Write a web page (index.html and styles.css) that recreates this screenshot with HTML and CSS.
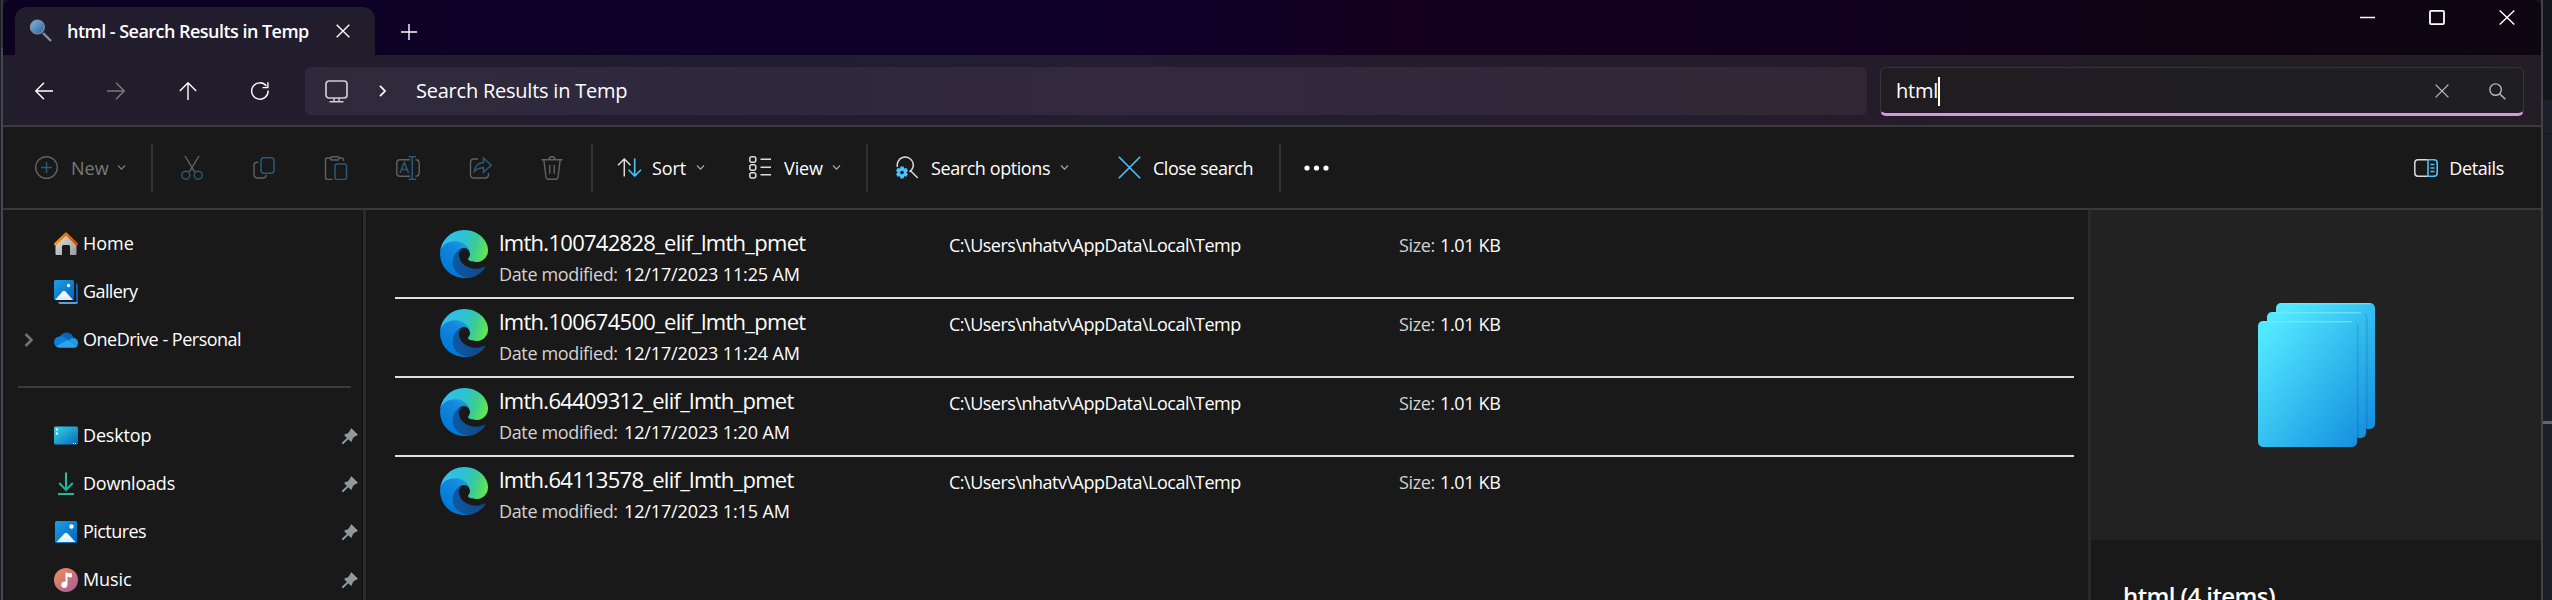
FILE: index.html
```html
<!DOCTYPE html>
<html lang="en">
<head>
<meta charset="utf-8">
<title>html - Search Results in Temp</title>
<link rel="stylesheet" href="styles.css">
</head>
<body>
<svg class="defs" width="0" height="0">
  <defs>
    <linearGradient id="edge-a" x1="63" y1="178" x2="241" y2="178" gradientUnits="userSpaceOnUse"><stop offset="0" stop-color="#0c5aa6"/><stop offset="1" stop-color="#134787"/></linearGradient>
    <linearGradient id="edge-b" x1="150" y1="80" x2="50" y2="225" gradientUnits="userSpaceOnUse"><stop offset="0" stop-color="#1b9de2"/><stop offset=".3" stop-color="#1488dd"/><stop offset="1" stop-color="#0078d6"/></linearGradient>
    <linearGradient id="edge-c" x1="10" y1="70" x2="255" y2="140" gradientUnits="userSpaceOnUse"><stop offset="0" stop-color="#35bdf3"/><stop offset=".45" stop-color="#2bc3d2"/><stop offset=".7" stop-color="#3bcb95"/><stop offset="1" stop-color="#66e949"/></linearGradient>
    <linearGradient id="sheet" x1="0" y1="0" x2="1" y2="1"><stop offset=".08" stop-color="#52e8ff"/><stop offset="1" stop-color="#1490df"/></linearGradient>
    <linearGradient id="photo" x1="0" y1="0" x2="1" y2="1"><stop offset="0" stop-color="#1ba0e6"/><stop offset="1" stop-color="#0463b8"/></linearGradient>
    <linearGradient id="desk" x1="0" y1="0" x2="1" y2="1"><stop offset="0" stop-color="#35d5e6"/><stop offset="1" stop-color="#0568bd"/></linearGradient>
    <linearGradient id="down" x1="0" y1="0" x2="0" y2="24" gradientUnits="userSpaceOnUse"><stop offset="0" stop-color="#34c98c"/><stop offset="1" stop-color="#12a5a5"/></linearGradient>
    <linearGradient id="music" x1="0" y1="0" x2="1" y2="1"><stop offset="0" stop-color="#f49154"/><stop offset="1" stop-color="#a3589f"/></linearGradient>
    <linearGradient id="roof" x1="0" y1="0" x2="1" y2="0"><stop offset="0" stop-color="#f59a10"/><stop offset="1" stop-color="#dd4a08"/></linearGradient>
    <linearGradient id="wall" x1="0" y1="0" x2="1" y2="1"><stop offset="0" stop-color="#e2e2e2"/><stop offset="1" stop-color="#9a9a9a"/></linearGradient>
    <linearGradient id="lens" x1="0" y1="0" x2="1" y2="1"><stop offset="0" stop-color="#85b9e0"/><stop offset="1" stop-color="#2b5f92"/></linearGradient>
    <linearGradient id="snow" x1="0" y1="0" x2="0" y2="1"><stop offset="0" stop-color="#fff"/><stop offset="1" stop-color="#dcebfb"/></linearGradient>
    <symbol id="edge" viewBox="4.6 4.9 256 256">
      <path fill="url(#edge-a)" d="M240.3 200.4a93.73 93.73 0 0 1-10.54 4.71 101.87 101.87 0 0 1-35.9 6.46c-47.32 0-88.54-32.55-88.54-74.32A31.48 31.48 0 0 1 121.76 109.9c-42.8 1.8-53.8 46.4-53.8 72.53 0 73.88 68.09 78.4 82.76 78.4 7.91 0 19.84-2.3 27-4.56l1.31-.44a128.34 128.34 0 0 0 66.6-49.8 4 4 0 0 0-5.33-5.63z"/>
      <path fill="url(#edge-b)" d="M110.34 246.34A79.2 79.2 0 0 1 87.6 225a80.72 80.72 0 0 1 29.53-120c3.12-1.47 8.45-4.13 15.54-4a32.35 32.35 0 0 1 25.69 13 31.88 31.88 0 0 1 6.36 18.66c0-.21 24.46-79.6-80-79.6-43.9 0-80 41.66-80 78.21a130.15 130.15 0 0 0 12.11 56 128 128 0 0 0 156.38 67.11 75.55 75.55 0 0 1-62.78-8z"/>
      <path fill="url(#edge-c)" d="M156.94 153.78c-.81 1.05-3.3 2.5-3.3 5.66 0 2.61 1.7 5.12 4.72 7.23 14.38 10 41.49 8.68 41.56 8.68a59.56 59.56 0 0 0 30.27-8.35 61.38 61.38 0 0 0 30.43-52.88c.26-22.41-8-37.31-11.34-43.91C228.09 28.76 182.35 4.92 132.61 4.92a128 128 0 0 0-128 126.2c.48-36.54 36.8-66.05 80-66.05 3.5 0 23.46.34 42 10.07 16.34 8.58 24.9 18.94 30.85 29.21 6.18 10.67 7.28 24.15 7.28 29.52s-2.74 13.33-7.8 19.91z"/>
    </symbol>
    <symbol id="pin" viewBox="0 0 16 16"><path fill="#8f9a9f" d="M9.3.2 15.8 6.4Q15.4 8 13.4 8L10.7 10.3Q10.8 12.5 9.2 14L6.3 11.2 1.4 15.9H0V14.5L4.9 9.9 2 7Q3.5 5.2 5.8 5.5L8.2 2.6Q8 .9 9.3.2z"/></symbol>
    <symbol id="chev" viewBox="0 0 8 5"><path fill="none" stroke="#a8a8a8" stroke-width="1.2" d="M.5.5 4 4.2 7.5.5"/></symbol>
  </defs>
</svg>
<div class="screen">
  <div class="edge-left"></div>
  <main class="window">
    <header class="tabs">
      <div class="tab">
        <svg width="24" height="24" viewBox="0 0 24 24"><path stroke="#8593a0" stroke-width="2.4" d="m14 14 8 8"/><circle cx="8.4" cy="8" r="7" fill="url(#lens)" stroke="#7c93a8" stroke-width="1.2"/></svg>
        <span class="tab-title">html - Search Results in Temp</span>
        <svg class="tab-close" width="14" height="14" viewBox="0 0 14 14"><path class="white" d="m.7.7 12.6 12.6M13.3.7.7 13.3"/></svg>
      </div>
      <svg class="add" width="16" height="16" viewBox="0 0 16 16"><path class="white" d="M8 0v16M0 8h16"/></svg>
      <div class="caption">
        <svg width="15" height="15" viewBox="0 0 15 15"><path class="white" d="M0 7.5h15"/></svg>
        <svg width="16" height="15" viewBox="0 0 16 15"><rect class="white thick" x="1" y=".9" width="14" height="13.2" rx="1"/></svg>
        <svg width="16" height="15" viewBox="0 0 16 15"><path class="white" d="m.7.5 14.6 14M15.3.5.7 14.5"/></svg>
      </div>
    </header>
    <nav class="nav">
      <div class="arrows">
        <svg width="18" height="18" viewBox="0 0 18 18"><path class="white" d="M18 9H1M9 .8.8 9 9 17.2"/></svg>
        <svg class="off" width="18" height="18" viewBox="0 0 18 18"><path class="white" d="M0 9h17M9 .8 17.2 9 9 17.2"/></svg>
        <svg width="18" height="18" viewBox="0 0 18 18"><path class="white" d="M9 18V1M.8 9 9 .8 17.2 9"/></svg>
        <svg width="18" height="18" viewBox="0 0 18 18"><path class="white" d="M15.4 4A8.2 8.2 0 1 0 17.1 8.5M16.9.3v5.3h-5.4"/></svg>
      </div>
      <div class="address">
        <svg width="23" height="23" viewBox="0 0 23 23"><rect x="1" y="1" width="21" height="17" rx="3" fill="none" stroke="#cfccd4" stroke-width="1.7"/><path stroke="#cfccd4" stroke-width="1.5" d="M9 18v3.5M14 18v3.5M4.5 21.7h14"/></svg>
        <svg class="crumb" width="7" height="12" viewBox="0 0 7 12"><path class="white thick" d="m1 .8 5 5.2-5 5.2"/></svg>
        <span class="path-title">Search Results in Temp</span>
      </div>
      <div class="search">
        <span class="query">html</span><i class="caret"></i>
        <svg class="clear" width="14" height="14" viewBox="0 0 14 14"><path stroke="#b9b9b9" stroke-width="1.3" d="m.6.6 12.8 12.8M13.4.6.6 13.4"/></svg>
        <svg width="17" height="17" viewBox="0 0 17 17"><circle cx="6.6" cy="6.6" r="5.7" fill="none" stroke="#b9b9b9" stroke-width="1.4"/><path stroke="#b9b9b9" stroke-width="1.5" d="m10.7 10.7 5.6 5.6"/></svg>
      </div>
    </nav>
    <section class="toolbar">
      <div class="tool new">
        <svg width="23" height="23" viewBox="0 0 23 23"><circle class="grey" cx="11.5" cy="11.5" r="10.8"/><path class="blue" d="M11.5 6v11M6 11.5h11"/></svg>
        <span class="label dim">New</span><svg class="chev dim-chev" width="9" height="5"><use href="#chev"/></svg>
      </div>
      <i class="rule"></i>
      <div class="icons">
        <svg width="24" height="24" viewBox="0 0 24 24"><path class="grey" d="M5 0l9.8 16.2M19 0 9.2 16.2"/><circle class="blue" cx="5.8" cy="19.2" r="4"/><circle class="blue" cx="18.2" cy="19.2" r="4"/></svg>
        <svg width="24" height="24" viewBox="0 0 24 24"><path class="grey" d="M6.2 6.2H5Q2 6.4 2 9v9.5Q2 22 5.5 22H11q3 0 3.4-3"/><rect class="blue" x="9" y="1.7" width="13" height="15.6" rx="3"/></svg>
        <svg width="24" height="24" viewBox="0 0 24 24"><path class="grey" d="M6 2H3Q1.5 2 1.5 4v17.4q0 2 2 2h5M15 2h2.500q2 0 2 2v1"/><rect class="grey" x="6.500" y=".7" width="8.500" height="3.300" rx="1.600"/><rect class="blue" x="11" y="8" width="11.500" height="15.400" rx="2"/></svg>
        <svg width="24" height="24" viewBox="0 0 24 24"><path class="grey" d="M14 3.700H4q-3.200 0-3.200 3.200v10.200q0 3.200 3.200 3.200h10M19.500 3.700q3.700 0 3.700 3.700v9.200q0 3.700-3.700 3.700"/><path class="blue" d="M12.500.7h7.500M12.500 23.300h7.500M16.200.7v22.600M4 17l4.300-10.500L12.600 17M5.500 13.600h5.600"/></svg>
        <svg width="24" height="24" viewBox="0 0 24 24"><path class="grey" d="M10 3H6Q2.500 3 2.500 6.500v12q0 3.500 3.500 3.500h11q3.500 0 3.500-3.500V17"/><path class="blue" d="M15.500 2v4.500Q7.500 7 6.200 15.500q4-4 9.300-3.800v4.500l7.700-7z"/></svg>
        <svg width="24" height="24" viewBox="0 0 24 24"><path class="grey" d="M1.500 3.700h21M3.800 3.700 6 21.200q.3 2 2.300 2h7.400q2 0 2.300-2L20.200 3.700M9 3.700Q9 .7 12 .7t3 3M9.700 9v8.700M14.300 9v8.700"/></svg>
      </div>
      <i class="rule"></i>
      <div class="tool sort">
        <svg width="25" height="19" viewBox="0 0 25 19"><path class="light" d="M7.300 18.500V1M1 7.200 7.300 1l6.200 6.200"/><path class="cyan" d="M17.700.5V18M11.500 11.800 17.700 18l6.300-6.200"/></svg>
        <span class="label">Sort</span><svg class="chev" width="9" height="5"><use href="#chev"/></svg>
      </div>
      <div class="tool view">
        <svg width="22" height="23" viewBox="0 0 22 23"><g class="light"><rect x=".8" y=".8" width="6" height="5.400" rx="2"/><rect x=".8" y="8.800" width="6" height="5.400" rx="2"/><rect x=".8" y="16.700" width="6" height="5.400" rx="2"/><path d="M11.500 3.200H22M11.500 11.200H22M11.500 18.700H22"/></g></svg>
        <span class="label">View</span><svg class="chev" width="9" height="5"><use href="#chev"/></svg>
      </div>
      <i class="rule"></i>
      <div class="tool options">
        <svg width="24" height="24" viewBox="0 0 24 24"><path class="light" d="M2.500 11A8 8 0 1 1 14.500 15.800M15.300 14.500l7.500 7.500"/><path fill="#4cc2ff" d="M5.500 10.500h3l.6 2.100 2.300-.6 1.600 2.700-1.700 1.700 1.700 1.700-1.600 2.700-2.300-.6-.6 2.300h-3l-.6-2.300-2.300.6L1 18.100l1.700-1.700L1 14.700 2.600 12l2.300.6z"/><circle cx="7" cy="16.500" r="1.800" fill="#191919"/></svg>
        <span class="label">Search options</span><svg class="chev" width="9" height="5"><use href="#chev"/></svg>
      </div>
      <div class="tool close">
        <svg width="23" height="23" viewBox="0 0 23 23"><path class="cyan" d="m.8.8 21.400 21.400M22.200.8.8 22.200"/></svg>
        <span class="label">Close search</span>
      </div>
      <i class="rule"></i>
      <svg class="more" width="26" height="6" viewBox="0 0 26 6"><g fill="#fff"><circle cx="3" cy="3" r="2.600"/><circle cx="12.500" cy="3" r="2.600"/><circle cx="22" cy="3" r="2.600"/></g></svg>
      <div class="tool details-button">
        <svg width="24" height="18" viewBox="0 0 24 18"><path class="light" d="M14 .8H4Q.8.8.8 4v10Q.8 17.200 4 17.200h10"/><path class="cyan" d="M14 .8h6q3.200 0 3.200 3.200v10q0 3.200-3.200 3.200h-6zM16.500 5.500h4M16.500 9h4M16.500 12.500h4"/></svg>
        <span class="label">Details</span>
      </div>
    </section>
    <div class="body">
      <aside class="side">
        <div class="row"><svg width="24" height="24" viewBox="0 0 24 24"><path fill="url(#wall)" d="M1.500 11 12 2l10.500 9v11q0 1-1 1H16v-8.500q0-1.500-1.500-1.500h-5Q8 13 8 14.500V23H2.500q-1 0-1-1z"/><path fill="none" stroke="url(#roof)" stroke-width="2.800" stroke-linejoin="round" stroke-linecap="round" d="M1.500 12 12 1.700 22.500 12"/></svg><span class="n-home">Home</span></div>
        <div class="row"><svg width="24" height="24" viewBox="0 0 24 24"><path fill="#0b5cad" d="M22 3q2 0 2 2v17q0 2-2 2z"/><path fill="#5c9fe0" d="M4 22h20q-.5 2-2 2H6q-1.500 0-2-2z"/><rect width="20" height="20" rx="1.500" fill="url(#photo)"/><path fill="url(#snow)" d="M1 20 8.500 11.500q1.500-1.500 3 0L19 20z"/><circle cx="14.500" cy="5.500" r="1.700" fill="#fff"/></svg><span class="n-gallery">Gallery</span></div>
        <div class="row"><svg class="expand" width="10" height="14" viewBox="0 0 10 14"><path fill="none" stroke="#737373" stroke-width="2.600" d="m1.500 1 6 6-6 6"/></svg><svg width="24" height="24" viewBox="0 0 24 24"><path fill="#0a63b8" d="M5.500 9Q8 4.200 13 4.400T19.500 10l-6 4z"/><path fill="#0c7fd9" d="M5.500 8.500q3-.6 6 1.500l5 3-13 6Q0 17.500 0 14q.300-5 5.500-5.500z"/><path fill="#1a9ae8" d="M15 12q2-2.500 5-2 4 .8 4 5 0 2-1 3.500z"/><path fill="#2aa5ec" d="m2 18 11-5.500q1.500-.7 3 .2l7 5.500Q22 19.700 20 19.700H5.500Q3 19.600 2 18z"/></svg><span class="n-onedrive">OneDrive - Personal</span></div>
        <hr class="sep">
        <div class="row"><svg width="24" height="24" viewBox="0 0 24 24"><rect y="2.500" width="24" height="18" rx="1.500" fill="url(#desk)"/><path fill="#fff" d="M2 4.500h2v2H2zM2 8.500h2v2H2zM19 19h1v1h-1zM21 19h1v1h-1z"/></svg><span class="n-desktop">Desktop</span><svg class="pin" width="16" height="16"><use href="#pin"/></svg></div>
        <div class="row"><svg width="24" height="24" viewBox="0 0 24 24"><path fill="none" stroke="url(#down)" stroke-width="2" d="M12 .5v17M5.200 11l6.800 7 6.800-7"/><path fill="#26b892" d="M4 21h16v2H4z"/></svg><span class="n-downloads">Downloads</span><svg class="pin" width="16" height="16"><use href="#pin"/></svg></div>
        <div class="row"><svg width="24" height="24" viewBox="0 0 24 24"><rect x="1" y="1" width="22" height="22" rx="1.500" fill="url(#photo)"/><path fill="url(#snow)" d="m2.500 22 8-8.500q1.500-1.500 3 0l8 8.500z"/><circle cx="17.500" cy="6.500" r="2.200" fill="#fff"/></svg><span class="n-pictures">Pictures</span><svg class="pin" width="16" height="16"><use href="#pin"/></svg></div>
        <div class="row"><svg width="24" height="24" viewBox="0 0 24 24"><circle cx="12" cy="12" r="12" fill="url(#music)"/><path fill="#fff" d="M11.500 4.500q3 .8 6.500.8v4q-2.500.3-4.500-.8v8.300a3.200 3.200 0 1 1-2-3z"/></svg><span class="n-music">Music</span><svg class="pin" width="16" height="16"><use href="#pin"/></svg></div>
      </aside>
      <div class="splitter"></div>
      <section class="results">
        <article class="file"><svg class="logo" width="48" height="48"><use href="#edge"/></svg><div class="info"><div class="name">lmth.100742828_elif_lmth_pmet</div><div class="date"><span class="key">Date modified:</span>12/17/2023 11:25 AM</div></div><div class="where">C:\Users\nhatv\AppData\Local\Temp</div><div class="size"><span class="key">Size:</span>1.01 KB</div></article>
        <article class="file"><svg class="logo" width="48" height="48"><use href="#edge"/></svg><div class="info"><div class="name">lmth.100674500_elif_lmth_pmet</div><div class="date"><span class="key">Date modified:</span>12/17/2023 11:24 AM</div></div><div class="where">C:\Users\nhatv\AppData\Local\Temp</div><div class="size"><span class="key">Size:</span>1.01 KB</div></article>
        <article class="file"><svg class="logo" width="48" height="48"><use href="#edge"/></svg><div class="info"><div class="name">lmth.64409312_elif_lmth_pmet</div><div class="date"><span class="key">Date modified:</span>12/17/2023 1:20 AM</div></div><div class="where">C:\Users\nhatv\AppData\Local\Temp</div><div class="size"><span class="key">Size:</span>1.01 KB</div></article>
        <article class="file"><svg class="logo" width="48" height="48"><use href="#edge"/></svg><div class="info"><div class="name">lmth.64113578_elif_lmth_pmet</div><div class="date"><span class="key">Date modified:</span>12/17/2023 1:15 AM</div></div><div class="where">C:\Users\nhatv\AppData\Local\Temp</div><div class="size"><span class="key">Size:</span>1.01 KB</div></article>
      </section>
      <aside class="details">
        <div class="preview">
          <svg width="118" height="145" viewBox="0 0 118 145">
            <rect x="18" y="0" width="99" height="126" rx="5" fill="url(#sheet)"/><path stroke="#7deaff" d="M23 .8h89"/>
            <rect x="10" y="10" width="99.500" height="125" rx="5" fill="#063c60" opacity=".18"/>
            <rect x="9" y="9" width="99" height="126" rx="5" fill="url(#sheet)"/><path stroke="#7deaff" d="M14 9.800h89"/>
            <rect x="1" y="19" width="99.500" height="125" rx="5" fill="#063c60" opacity=".18"/>
            <rect x="0" y="18" width="99" height="126" rx="5" fill="url(#sheet)"/><path stroke="#7deaff" d="M5 18.800h89"/>
          </svg>
        </div>
        <h2 class="count">html (4 items)</h2>
      </aside>
    </div>
  </main>
  <div class="edge-right"><div class="strip-a"></div><div class="strip-b"></div><div class="strip-c"></div><div class="strip-d"></div></div>
</div>
</body>
</html>
```
FILE: styles.css
```css
* { box-sizing: border-box; }
body { margin: 0; background: #15161b; color: #fff; font: 18px/24px "Open Sans", "Noto Sans", sans-serif; overflow: hidden; }
svg { display: block; flex: none; }
span { white-space: nowrap; }
.defs { position: absolute; }
.screen { display: flex; width: 2552px; height: 600px; overflow: hidden; }

/* Desktop and window frame on either side */
.edge-left { flex: none; width: 3px; border-left: 1px solid #1c1e27; background: linear-gradient(#35353b 48px, #474852 48px); }
.edge-right { flex: none; width: 11px; border-left: 2px solid #434347; }
.strip-a { height: 100px; background: #15161b; }
.strip-b { height: 34px; background: #1f1e2b; border-bottom: 1px solid #15161e; }
.strip-c { height: 287px; background: #1e1e2b; }
.strip-d { height: 179px; background: #1e1e2b; border-top: 3px solid #646469; }
.window { flex: none; width: 2538px; height: 600px; display: flex; flex-direction: column; background: #191919; border-radius: 8px 8px 0 0; overflow: hidden; }

/* Strokes */
.white { fill: none; stroke: #fff; stroke-width: 1.4; }
.thick { stroke-width: 1.8; }
.grey { fill: none; stroke: #616161; stroke-width: 1.4; }
.blue { fill: none; stroke: #2a5a75; stroke-width: 1.5; }
.light { fill: none; stroke: #dcdcdc; stroke-width: 1.5; }
.cyan { fill: none; stroke: #4cc2ff; stroke-width: 1.6; }

.tabs { display: flex; height: 55px; flex: none; background: linear-gradient(90deg, #0d0122, #0f0129 25%, #10002a 45%, #15001f 55%, #12001f 72%, #100313 85%, #0e0612); }
.tab { display: flex; align-items: center; width: 360px; height: 48px; margin: 7px 0 0 12px; padding-left: 14px; background: #221d2d; border-radius: 12px 12px 0 0; }
.tab-title { width: 245px; margin-left: 14px; font-weight: 600; letter-spacing: -.53px; }
.tab-close { margin-left: 24px; }
.add { margin: 24px 0 0 26px; }
.caption { display: flex; gap: 54px; margin: 10px 26px 0 auto; }

.nav { display: flex; align-items: center; height: 72px; flex: none; padding: 2px 17px 0 32px; border-bottom: 2px solid #3b3b3b; background: linear-gradient(90deg, #211d2d, #231d2f 40%, #251b2c 72%, #231e24 88%, #241d26); }
.arrows { display: flex; gap: 54px; width: 270px; flex: none; }
.off { opacity: .4; }
.address { display: flex; align-items: center; width: 1562px; flex: none; height: 48px; padding-left: 20px; border-radius: 6px; background: linear-gradient(90deg, #2f2a3b, #2e283d 30%, #33283e 50%, #302736); }
.crumb { margin-left: 31px; }
.path-title { margin-left: 30px; font-size: 20px; letter-spacing: -.23px; }
.search { display: flex; align-items: center; flex: 1; height: 49px; margin-left: 13px; padding: 2px 17px 0 15px; border: 1px solid #3a3239; border-bottom: 3px solid #d896e2; border-radius: 6px; background: linear-gradient(90deg, #201d21, #1f1f21); }
.query { font-size: 20px; letter-spacing: -.2px; }
.caret { width: 2px; height: 29px; background: #fff; margin-left: 0; }
.clear { margin: 0 40px 0 auto; }

.toolbar { display: flex; align-items: center; height: 83px; flex: none; padding: 0 37px 0 32px; border-bottom: 2px solid #393939; }
.tool { display: flex; align-items: center; }
.rule { width: 2px; height: 48px; background: #303030; flex: none; }
.dim { color: #797979; }
.chev { margin-left: auto; }
.dim-chev { opacity: .7; }
.new { width: 91px; margin-right: 25px; }
.new .label { margin-left: 13px; }
.icons { display: flex; gap: 48px; margin: 0 27px 0 27px; }
.sort { width: 88px; margin: 0 44px 0 24px; }
.sort .label { margin-left: 10px; letter-spacing: -.1px; }
.view { width: 92px; margin-right: 25px; }
.view .label { margin-left: 13px; letter-spacing: -.1px; }
.options { width: 174px; margin: 0 49px 0 27px; }
.options .label { margin-left: 12px; letter-spacing: -.42px; }
.close { width: 161px; }
.close .label { margin-left: 12px; letter-spacing: -.48px; }
.more { margin-left: 23px; }
.details-button { margin-left: auto; }
.details-button .label { margin-left: 11px; letter-spacing: -.35px; }

.body { display: flex; flex: 1; min-height: 0; }
.side { width: 359px; flex: none; padding-top: 10px; }
.row { display: flex; align-items: center; height: 48px; padding: 0 4px 0 51px; }
.row span { margin: -2px 0 0 5px; }
.expand { margin: 0 20px 0 -30px; }
.pin { margin-left: auto; }
.sep { height: 2px; margin: 22px 11px 24px 15px; border: 0; background: #3b3b3b; }
.n-gallery { letter-spacing: -.6px; }
.n-onedrive { letter-spacing: -.5px; }
.n-desktop { letter-spacing: -.15px; }
.n-downloads { letter-spacing: -.2px; }
.n-pictures { letter-spacing: -.56px; }
.n-music { letter-spacing: -.1px; }
.splitter { width: 6px; flex: none; border: solid #171717; border-width: 0 2px 0 1px; border-left-color: #121212; background: #2b2b2b; }

.results { width: 1679px; margin: 10px 0 0 27px; flex: none; }
.file { display: flex; height: 79px; border-bottom: 2px solid #e0e0e0; }
.file:last-child { border-bottom: 0; }
.logo { margin: 10px 0 0 45px; }
.info { width: 450px; margin: 7px 0 0 11px; }
.name { font-size: 22px; line-height: 31px; letter-spacing: -.72px; }
.date { line-height: 32px; letter-spacing: -.13px; }
.key { display: inline-block; width: 125px; color: #d3d3d3; letter-spacing: -.36px; }
.where { width: 450px; margin-top: 13px; letter-spacing: -.5px; }
.size { margin-top: 13px; letter-spacing: -.35px; }
.size .key { width: 41px; }

.details { flex: 1; margin-left: 14px; border-left: 3px solid #2a2a2a; }
.preview { height: 330px; padding: 93px 0 0 167px; background: #222; }
.count { margin: 39px 0 0 32px; font-size: 24px; line-height: 34px; font-weight: 600; letter-spacing: -.6px; white-space: nowrap; }
```
